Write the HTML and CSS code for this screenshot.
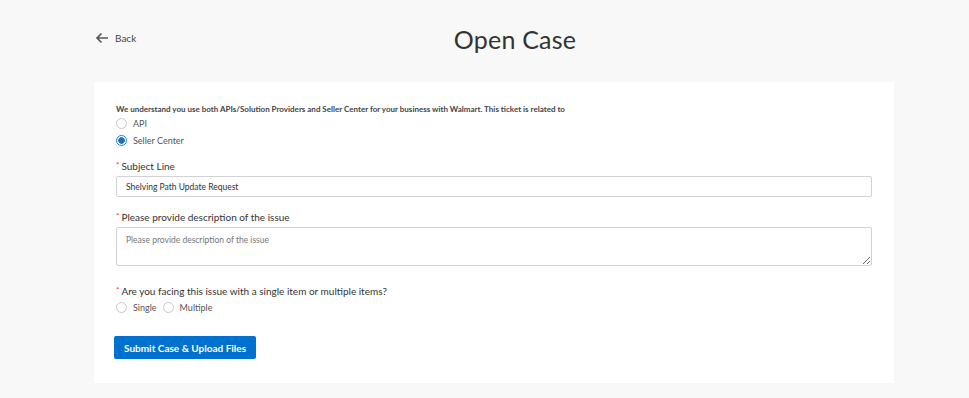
FILE: index.html
```html
<!DOCTYPE html>
<html lang="en">
<head>
    <meta charset="UTF-8">
    <meta name="viewport" content="width=device-width, initial-scale=1.0">
    <title>Open Case</title>
    <link rel="stylesheet" href="styles.css">
</head>
<body>

<div class="page">
    <div class="header">
        <a class="back" href="#">
            <svg width="14" height="12" viewBox="0 0 14 12"><path d="M13 6H2M6.5 1.5L2 6l4.5 4.5" fill="none" stroke="#555" stroke-width="1.6"/></svg>
            <span>Back</span>
        </a>
        <h1>Open Case</h1>
    </div>

    <div class="card">
        <p class="intro">We understand you use both APIs/Solution Providers and Seller Center for your business with Walmart. This ticket is related to</p>
        <div class="radio-list">
            <label class="radio"><span class="dot"></span>API</label>
            <label class="radio"><span class="dot checked"></span>Seller Center</label>
        </div>

        <div class="field subject">
            <label class="label"><span class="req">*</span>Subject Line</label>
            <input type="text" class="input" value="Shelving Path Update Request">
        </div>

        <div class="field">
            <label class="label"><span class="req">*</span>Please provide description of the issue</label>
            <textarea class="textarea" placeholder="Please provide description of the issue"></textarea>
        </div>

        <div class="field items">
            <label class="label"><span class="req">*</span>Are you facing this issue with a single item or multiple items?</label>
            <div class="radio-row">
                <label class="radio"><span class="dot"></span>Single</label>
                <label class="radio"><span class="dot"></span>Multiple</label>
            </div>
        </div>

        <button class="submit">Submit Case &amp; Upload Files</button>
    </div>
</div>

</body>
</html>
```

FILE: styles.css
```css
body {
    font-family: Lato, "Open Sans", sans-serif;
    background-color: #f8f8f8;
    margin: 0;
    color: #333;
}
.page {
    width: 800px;
    margin-left: 94px;
}
.header {
    position: relative;
    height: 82px;
    display: flex;
    align-items: center;
    justify-content: center;
}
.back {
    position: absolute;
    left: 1px;
    top: 32px;
    display: flex;
    align-items: center;
    gap: 6px;
    color: #444;
    text-decoration: none;
    font-size: 10px;
}
.header h1 {
    margin: 0 0 5px 0;
    font-weight: 400;
    font-size: 25px;
    color: #333;
    letter-spacing: 0.2px;
    padding-left: 42px;
}
.card {
    background-color: #fff;
    padding: 22px 22px 24px 22px;
    height: 255px;
}
.intro {
    margin: 0 0 3px 0;
    font-size: 8px;
    font-weight: 700;
    color: #444;
}
.radio-list {
    display: flex;
    flex-direction: column;
    gap: 5px;
}
.radio-row {
    display: flex;
    gap: 6px;
    margin-top: 4px;
}
.radio {
    display: flex;
    align-items: center;
    gap: 6px;
    font-size: 9px;
    color: #555;
    height: 12px;
}
.dot {
    width: 9px;
    height: 9px;
    border: 1px solid #c8c8c8;
    border-radius: 50%;
    box-sizing: content-box;
    display: inline-block;
}
.dot.checked {
    border-color: #1a7fd8;
    background: radial-gradient(circle, #1f6fc0 0 3px, #fff 3.5px);
}
.field {
    margin-top: 14px;
}
.field.subject {
    margin-top: 14px;
}
.field.items {
    margin-top: 19px;
}
.label {
    display: block;
    font-size: 10px;
    color: #333;
    margin-bottom: 4px;
}
.req {
    color: #e33;
    font-size: 8px;
    vertical-align: top;
    margin-right: 2px;
}
.input, .textarea {
    display: block;
    width: 100%;
    box-sizing: border-box;
    border: 1px solid #d2d2d2;
    border-radius: 2px;
    font-family: Lato, sans-serif;
    font-size: 8.5px;
    color: #333;
    padding: 0 9px;
}
.input {
    height: 21px;
}
.textarea {
    height: 39px;
    padding-top: 7px;
    resize: vertical;
}
.textarea::placeholder {
    color: #777;
}
.submit {
    margin-top: 23px;
    margin-left: -2px;
    background-color: #0071ce;
    color: #fff;
    border: none;
    border-radius: 2px;
    font-family: Lato, sans-serif;
    font-weight: 700;
    font-size: 10px;
    padding: 0 10px;
    height: 23px;
    cursor: pointer;
}
```
